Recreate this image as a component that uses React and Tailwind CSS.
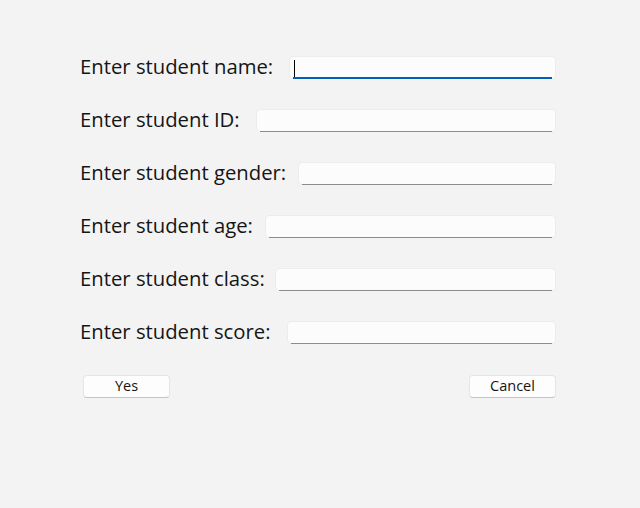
import React from 'react';

const fields = [
  { label: 'Enter student name:', width: 'w-[209px]', focused: true },
  { label: 'Enter student ID:', width: 'w-[176px]' },
  { label: 'Enter student gender:', width: 'w-[218px]' },
  { label: 'Enter student age:', width: 'w-[185px]' },
  { label: 'Enter student class:', width: 'w-[195px]' },
  { label: 'Enter student score:', width: 'w-[207px]' },
];

const Field = ({ label, width, focused }) => (
  <div className="flex items-center h-[23px]">
    <span className={`${width} shrink-0 whitespace-nowrap pb-[3px] text-[20.3px] text-[#151515] leading-none`}>
      {label}
    </span>
    <div className="relative flex-1 h-[23px] rounded-[4px] bg-[#fcfcfc] border border-[#ececec]">
      {focused && <span className="absolute left-[4px] top-[3px] w-px h-[17px] bg-black" />}
      <span
        className={`absolute left-[3px] right-[3px] -bottom-px ${
          focused ? 'h-[2px] bg-[#005fb8]' : 'h-px bg-[#8c8c8c]'
        }`}
      />
    </div>
  </div>
);

const Button = ({ children }) => (
  <button className="w-[87px] h-[23px] rounded-[4px] bg-[#fdfdfd] border border-[#e5e5e5] border-b-[#c4c4c4] pb-px text-[14.5px] text-[#151515] leading-none">
    {children}
  </button>
);

export default function App() {
  return (
    <div
      className="w-[640px] h-[508px] bg-[#f3f3f3] pt-[56px] pl-[80px] pr-[84px]"
      style={{ fontFamily: '"Open Sans", "Noto Sans", sans-serif' }}
    >
      <div className="flex flex-col gap-[30px]">
        {fields.map((f) => (
          <Field key={f.label} {...f} />
        ))}
      </div>
      <div className="flex justify-between mt-[31px] pl-[3px]">
        <Button>Yes</Button>
        <Button>Cancel</Button>
      </div>
    </div>
  );
}
